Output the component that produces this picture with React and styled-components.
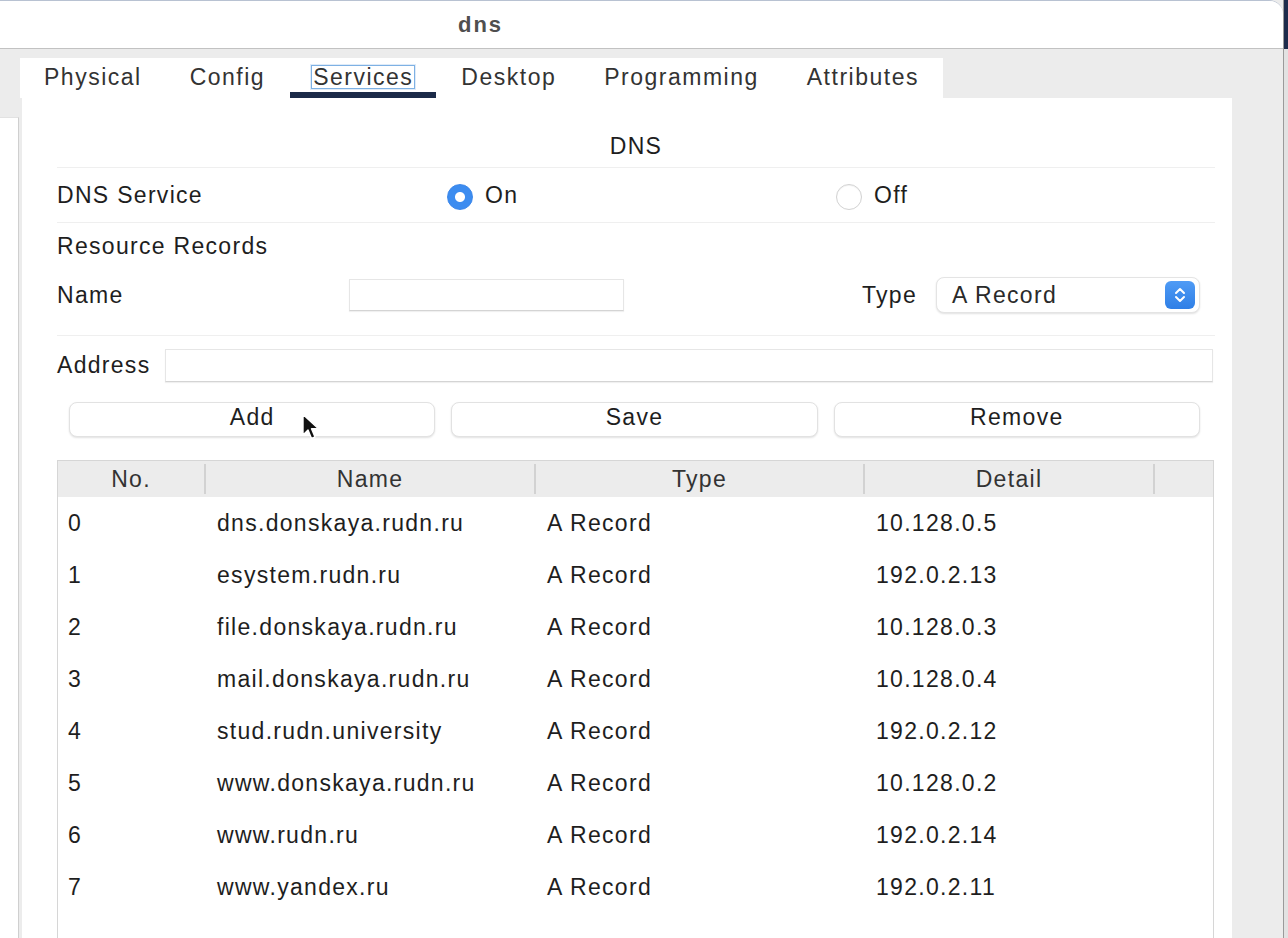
import React, { useState } from "react";
import styled, { createGlobalStyle } from "styled-components";

const GlobalStyle = createGlobalStyle`
  html, body {
    margin: 0;
    padding: 0;
    height: 100%;
  }
  body {
    font-family: "Liberation Sans", Arial, sans-serif;
    background: #ececec;
    overflow: hidden;
  }
  #root {
    height: 100%;
  }
  * {
    box-sizing: border-box;
  }
`;

const TABS = ["Physical", "Config", "Services", "Desktop", "Programming", "Attributes"];

const RECORDS = [
  ["0", "dns.donskaya.rudn.ru", "A Record", "10.128.0.5"],
  ["1", "esystem.rudn.ru", "A Record", "192.0.2.13"],
  ["2", "file.donskaya.rudn.ru", "A Record", "10.128.0.3"],
  ["3", "mail.donskaya.rudn.ru", "A Record", "10.128.0.4"],
  ["4", "stud.rudn.university", "A Record", "192.0.2.12"],
  ["5", "www.donskaya.rudn.ru", "A Record", "10.128.0.2"],
  ["6", "www.rudn.ru", "A Record", "192.0.2.14"],
  ["7", "www.yandex.ru", "A Record", "192.0.2.11"],
];

const App = () => {
  const [serviceOn, setServiceOn] = useState(true);

  return (
    <>
      <GlobalStyle />
      <Screen>
        <Window>
          <TitleBar>dns</TitleBar>
          <WindowBody>
            <SideSliver />
            <MainColumn>
              <TabBar>
                {TABS.map((tab) => (
                  <Tab key={tab} $active={tab === "Services"}>
                    <TabLabel $focused={tab === "Services"}>{tab}</TabLabel>
                  </Tab>
                ))}
              </TabBar>
              <Panel>
                <Heading>DNS</Heading>
                <ServiceRow>
                  <Label>DNS Service</Label>
                  <RadioOption onClick={() => setServiceOn(true)}>
                    <RadioCircle $checked={serviceOn} />
                    <Label>On</Label>
                  </RadioOption>
                  <RadioOption onClick={() => setServiceOn(false)}>
                    <RadioCircle $checked={!serviceOn} />
                    <Label>Off</Label>
                  </RadioOption>
                </ServiceRow>
                <RecordsRow>
                  <Label>Resource Records</Label>
                </RecordsRow>
                <NameRow>
                  <FieldLabel $width={292}>Name</FieldLabel>
                  <TextInput $width={275} $height={32} />
                  <TypeLabel>Type</TypeLabel>
                  <Select>
                    <SelectText>A Record</SelectText>
                    <Stepper>
                      <svg width="14" height="20" viewBox="0 0 14 20" fill="none">
                        <path
                          d="M3 8 L7 4 L11 8 M3 12 L7 16 L11 12"
                          stroke="#fff"
                          strokeWidth="2"
                          strokeLinecap="round"
                          strokeLinejoin="round"
                        />
                      </svg>
                    </Stepper>
                  </Select>
                </NameRow>
                <AddressRow>
                  <FieldLabel $width={108}>Address</FieldLabel>
                  <TextInput $grow $height={33} />
                </AddressRow>
                <ButtonRow>
                  <Button>
                    Add
                    <Cursor width="20" height="28" viewBox="0 0 20 28">
                      <path
                        d="M2 1.5 L2 22 L7 17 L10.5 25.5 L14 24 L10.5 15.8 L17.5 15.8 Z"
                        fill="#111"
                        stroke="#fff"
                        strokeWidth="1.4"
                        strokeLinejoin="round"
                      />
                    </Cursor>
                  </Button>
                  <Button>Save</Button>
                  <Button>Remove</Button>
                </ButtonRow>
                <Table>
                  <HeaderRow>
                    <HeaderCell>No.</HeaderCell>
                    <HeaderCell>Name</HeaderCell>
                    <HeaderCell>Type</HeaderCell>
                    <HeaderCell>Detail</HeaderCell>
                    <HeaderFiller />
                  </HeaderRow>
                  {RECORDS.map((row) => (
                    <BodyRow key={row[0]}>
                      {row.map((cell, i) => (
                        <BodyCell key={i} $first={i === 0}>
                          {cell}
                        </BodyCell>
                      ))}
                    </BodyRow>
                  ))}
                </Table>
              </Panel>
            </MainColumn>
          </WindowBody>
        </Window>
        <DesktopEdge />
      </Screen>
    </>
  );
};

export default App;

const Screen = styled.div`
  display: flex;
  width: 1288px;
  height: 938px;
  overflow: hidden;
  color: #1e1e1e;
  font-size: 23px;
  letter-spacing: 1.3px;
`;

const Window = styled.div`
  width: 1283px;
  display: flex;
  flex-direction: column;
  border-top: 1px solid #b8c2d2;
  border-top-right-radius: 14px;
  overflow: hidden;
  background: #ececec;
`;

const TitleBar = styled.div`
  height: 48px;
  flex-shrink: 0;
  display: flex;
  align-items: center;
  justify-content: center;
  padding-right: 322px;
  background: #ffffff;
  border-bottom: 1px solid #c2c2c2;
  color: #4f4f4f;
  font-weight: 700;
  font-size: 22px;
  letter-spacing: 1.9px;
`;

const WindowBody = styled.div`
  flex: 1;
  display: flex;
  padding-top: 9px;
  min-height: 0;
`;

const SideSliver = styled.div`
  width: 19px;
  margin-top: 59px;
  background: #ffffff;
  border-right: 1px solid #cfcfcf;
  border-top: 1px solid #e2e2e2;
`;

const MainColumn = styled.div`
  width: 1212px;
  margin-left: 1px;
  display: flex;
  flex-direction: column;
`;

const TabBar = styled.div`
  align-self: flex-start;
  height: 40px;
  display: flex;
  background: #ffffff;
`;

const Tab = styled.div`
  position: relative;
  display: flex;
  align-items: center;
  padding: 0 23px 2px;
  color: #333;
  letter-spacing: 1.5px;

  &::after {
    content: "";
    display: ${(p) => (p.$active ? "block" : "none")};
    position: absolute;
    left: 1px;
    right: 1px;
    bottom: 0;
    height: 6px;
    background: #1b2a48;
  }
`;

const TabLabel = styled.span`
  line-height: 22px;
  padding: 0 1px;
  outline: ${(p) => (p.$focused ? "1px solid #7eb1e4" : "none")};
  box-shadow: ${(p) => (p.$focused ? "0 0 0 2px rgba(126, 177, 228, 0.25)" : "none")};
`;

const Panel = styled.div`
  flex: 1;
  margin-left: 2px;
  width: 1210px;
  display: flex;
  flex-direction: column;
  padding: 0 17px 0 35px;
  background: #ffffff;
  min-height: 0;
`;

const Heading = styled.div`
  padding: 36px 0 9px;
  line-height: 24px;
  text-align: center;
  border-bottom: 1px solid #efefef;
`;

const Label = styled.span`
  line-height: 24px;
  white-space: nowrap;
`;

const ServiceRow = styled.div`
  height: 55px;
  display: grid;
  grid-template-columns: 390px 389px 1fr;
  align-items: center;
  border-bottom: 1px solid #efefef;
`;

const RadioOption = styled.div`
  display: flex;
  align-items: center;
  gap: 12px;
  cursor: pointer;
`;

const RadioCircle = styled.span`
  width: 26px;
  height: 26px;
  margin-top: 3px;
  border-radius: 50%;
  background: ${(p) =>
    p.$checked
      ? "radial-gradient(circle, #ffffff 0 4.5px, #3c8cf0 5.5px)"
      : "#ffffff"};
  border: 1px solid ${(p) => (p.$checked ? "#3a86ea" : "#d2d2d2")};
  box-shadow: ${(p) => (p.$checked ? "none" : "inset 0 1px 1px rgba(0,0,0,0.05)")};
`;

const RecordsRow = styled.div`
  height: 46px;
  display: flex;
  align-items: center;
`;

const NameRow = styled.div`
  display: flex;
  align-items: center;
  height: 36px;
  margin-top: 8px;
  box-sizing: content-box;
  padding-bottom: 22px;
  border-bottom: 1px solid #efefef;
`;

const FieldLabel = styled.span`
  width: ${(p) => p.$width}px;
  flex-shrink: 0;
  white-space: nowrap;
`;

const TextInput = styled.div`
  width: ${(p) => (p.$grow ? "auto" : `${p.$width}px`)};
  flex: ${(p) => (p.$grow ? 1 : "none")};
  height: ${(p) => p.$height}px;
  background: #ffffff;
  border: 1px solid #e6e6e6;
  border-bottom-color: #d4d4d4;
  box-shadow: 0 1px 1px rgba(0, 0, 0, 0.06);
`;

const TypeLabel = styled.span`
  margin-left: auto;
  margin-right: 19px;
`;

const Select = styled.div`
  width: 264px;
  height: 36px;
  margin-right: 15px;
  display: flex;
  align-items: center;
  justify-content: space-between;
  padding: 0 4px 0 15px;
  background: #ffffff;
  border: 1px solid #e4e4e4;
  border-radius: 8px;
  box-shadow: 0 1px 2px rgba(0, 0, 0, 0.12);
`;

const SelectText = styled.span`
  color: #2a2a2a;
`;

const Stepper = styled.div`
  width: 30px;
  height: 28px;
  display: flex;
  align-items: center;
  justify-content: center;
  border-radius: 6px;
  background: linear-gradient(#4f9bf5, #2f7fe6);
`;

const AddressRow = styled.div`
  display: flex;
  align-items: center;
  margin-top: 13px;
  margin-right: 2px;
`;

const ButtonRow = styled.div`
  display: grid;
  grid-template-columns: repeat(3, 1fr);
  gap: 16px;
  margin-top: 20px;
  padding: 0 15px 0 12px;
`;

const Button = styled.div`
  position: relative;
  height: 35px;
  display: flex;
  align-items: center;
  justify-content: center;
  padding-bottom: 4px;
  background: #ffffff;
  border: 1px solid #e2e2e2;
  border-radius: 8px;
  box-shadow: 0 1px 2px rgba(0, 0, 0, 0.12);
  cursor: default;
`;

const Cursor = styled.svg`
  position: absolute;
  left: 231px;
  top: 10px;
`;

const Table = styled.div`
  flex: 1;
  margin-top: 23px;
  margin-right: 1px;
  border: 1px solid #d6d6d6;
  border-bottom: none;
`;

const COLUMNS = "148px 330px 329px 290px 1fr";

const HeaderRow = styled.div`
  display: grid;
  grid-template-columns: ${COLUMNS};
  height: 36px;
  padding: 3px 0;
  background: #ececec;
`;

const HeaderCell = styled.div`
  display: flex;
  align-items: center;
  justify-content: center;
  border-right: 2px solid #d2d2d2;
  color: #333;
`;

const HeaderFiller = styled.div``;

const BodyRow = styled.div`
  display: grid;
  grid-template-columns: ${COLUMNS};
  height: 52px;
  align-items: center;
`;

const BodyCell = styled.div`
  padding-left: ${(p) => (p.$first ? 10 : 11)}px;
  white-space: nowrap;
`;

const DesktopEdge = styled.div`
  width: 5px;
  background: linear-gradient(#1d2b4b 0 49px, #e2e2e2 49px);
  border-left: 1px solid #9a9a9a;
`;
